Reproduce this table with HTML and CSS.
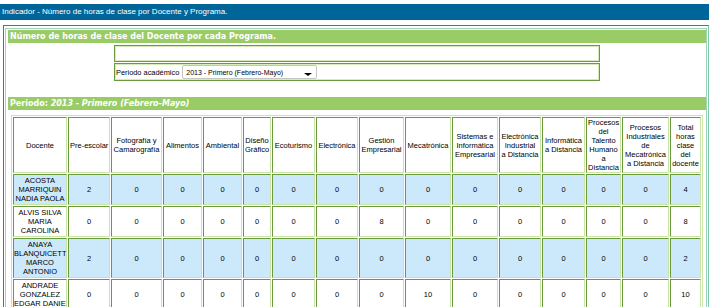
FILE: index.html
```html
<!DOCTYPE html>
<html lang="es">
<head>
<meta charset="utf-8">
<title>Indicador</title>
<link rel="stylesheet" href="styles.css">
</head>
<body>
<div class="topbar">Indicador - Número de horas de clase por Docente y Programa.</div>
<div class="frame">
  <div class="frame-inner">
    <div class="bar">Número de horas de clase del Docente por cada Programa.</div>
    <div class="form">
      <div class="form-row"></div>
      <div class="form-row second">
        <span class="label">Periodo académico</span>
        <div class="select">
          <span class="select-text">2013 - Primero (Febrero-Mayo)</span>
          <svg class="arrow" width="8" height="3" viewBox="0 0 8 3"><path d="M0 0H8L4 3Z" fill="#000"/></svg>
        </div>
      </div>
    </div>
    <div class="bar period">Periodo: <em>2013 - Primero (Febrero-Mayo)</em></div>
    <table class="data">
      <thead>
        <tr>
          <th>Docente</th>
          <th>Pre-escolar</th>
          <th>Fotografía y<br>Camarografía</th>
          <th>Alimentos</th>
          <th>Ambiental</th>
          <th>Diseño<br>Gráfico</th>
          <th>Ecoturismo</th>
          <th>Electrónica</th>
          <th>Gestión<br>Empresarial</th>
          <th>Mecatrónica</th>
          <th>Sistemas e<br>Informática<br>Empresarial</th>
          <th>Electrónica<br>Industrial<br>a Distancia</th>
          <th>Informática<br>a Distancia</th>
          <th>Procesos<br>del<br>Talento<br>Humano<br>a<br>Distancia</th>
          <th>Procesos<br>Industriales<br>de<br>Mecatrónica<br>a Distancia</th>
          <th>Total<br>horas<br>clase<br>del<br>docente</th>
        </tr>
      </thead>
      <tbody>
        <tr class="alt">
          <td class="name">ACOSTA<br>MARRIQUIN<br>NADIA PAOLA</td>
          <td>2</td><td>0</td><td>0</td><td>0</td><td>0</td><td>0</td><td>0</td><td>0</td><td>0</td><td>0</td><td>0</td><td>0</td><td>0</td><td>0</td><td>4</td>
        </tr>
        <tr>
          <td class="name">ALVIS SILVA<br>MARIA<br>CAROLINA</td>
          <td>0</td><td>0</td><td>0</td><td>0</td><td>0</td><td>0</td><td>0</td><td>8</td><td>0</td><td>0</td><td>0</td><td>0</td><td>0</td><td>0</td><td>8</td>
        </tr>
        <tr class="alt">
          <td class="name">ANAYA<br>BLANQUICETT<br>MARCO<br>ANTONIO</td>
          <td>2</td><td>0</td><td>0</td><td>0</td><td>0</td><td>0</td><td>0</td><td>0</td><td>0</td><td>0</td><td>0</td><td>0</td><td>0</td><td>0</td><td>2</td>
        </tr>
        <tr>
          <td class="name">ANDRADE<br>GONZALEZ<br>EDGAR DANIEL</td>
          <td>0</td><td>0</td><td>0</td><td>0</td><td>0</td><td>0</td><td>0</td><td>0</td><td>10</td><td>0</td><td>0</td><td>0</td><td>0</td><td>0</td><td>10</td>
        </tr>
      </tbody>
    </table>
  </div>
</div>
</body>
</html>
```
FILE: styles.css
```css
html, body {
  margin: 0;
  padding: 0;
  background: #ffffff;
  font-family: "Liberation Sans", Arial, sans-serif;
  color: #000000;
}

.topbar {
  margin-top: 4px;
  height: 16px;
  line-height: 16px;
  background: #006699;
  color: #ffffff;
  font-size: 8px;
  padding-left: 2px;
}

.frame {
  margin: 5px 0 0 3px;
  border: 1px solid;
  border-color: #2f8a6c #7ecaa6 #7ecaa6 #2f8a6c;
  padding: 2px 1px 0 1px;
}

.frame-inner {
  border: 1px solid #9fd6bb;
  padding: 1px 0 40px 2px;
}

.bar {
  height: 13px;
  line-height: 13px;
  background: #99cc66;
  color: #ffffff;
  font-family: "DejaVu Sans", Verdana, sans-serif;
  font-weight: bold;
  font-size: 8px;
  padding-left: 2px;
  white-space: nowrap;
}

.bar em {
  font-style: italic;
}

.period {
  margin-top: 16px;
}

.form {
  width: 486px;
  margin: 2px auto 0;
}

.form-row {
  box-sizing: border-box;
  height: 17px;
  border: 1px solid #6b9a3e;
  box-shadow: inset 0 0 0 1px #d5ebba;
  display: flex;
  align-items: center;
  padding-left: 1px;
}

.form-row.second {
  margin-top: 1px;
  height: 18px;
}

.label {
  font-size: 7.4px;
  color: #000000;
  white-space: nowrap;
}

.select {
  box-sizing: border-box;
  margin-left: 3px;
  width: 135px;
  height: 14px;
  border: 1px solid #c4c4c4;
  border-radius: 2px;
  background: #ffffff;
  display: flex;
  align-items: center;
  padding-left: 3px;
}

.select-text {
  flex: 1;
  font-size: 7px;
  color: #000000;
  white-space: nowrap;
}

.arrow {
  align-self: flex-end;
  margin: 0 4px 2px 0;
}

.data {
  margin: 5px 0 0 3px;
  width: 692px;
  table-layout: fixed;
  border-collapse: separate;
  border-spacing: 1px;
  border: 1px solid #c9e3a9;
}

.data th,
.data td {
  box-sizing: border-box;
  border: 1px solid;
  border-color: #6b9a3e #c9e3a9 #c9e3a9 #6b9a3e;
  padding: 1px;
  text-align: center;
  vertical-align: middle;
  font-size: 7.5px;
  line-height: 9px;
  color: #000000;
  background: #ffffff;
}

.data th {
  font-weight: normal;
  padding: 0 1px;
  white-space: nowrap;
}

.data td.name {
  white-space: nowrap;
  overflow: hidden;
  padding: 1px 0;
}

.data tr.alt td {
  background: #cce9fb;
}

.data th:nth-child(1) { width: 54px; }
.data th:nth-child(2) { width: 42px; }
.data th:nth-child(3) { width: 51px; }
.data th:nth-child(4) { width: 39px; }
.data th:nth-child(5) { width: 39px; }
.data th:nth-child(6) { width: 28px; }
.data th:nth-child(7) { width: 43px; }
.data th:nth-child(8) { width: 42px; }
.data th:nth-child(9) { width: 45px; }
.data th:nth-child(10) { width: 46px; }
.data th:nth-child(11) { width: 46px; }
.data th:nth-child(12) { width: 42px; }
.data th:nth-child(13) { width: 43px; }
.data th:nth-child(14) { width: 35px; }
.data th:nth-child(15) { width: 47px; }
.data th:nth-child(16) { width: 31px; }
```
